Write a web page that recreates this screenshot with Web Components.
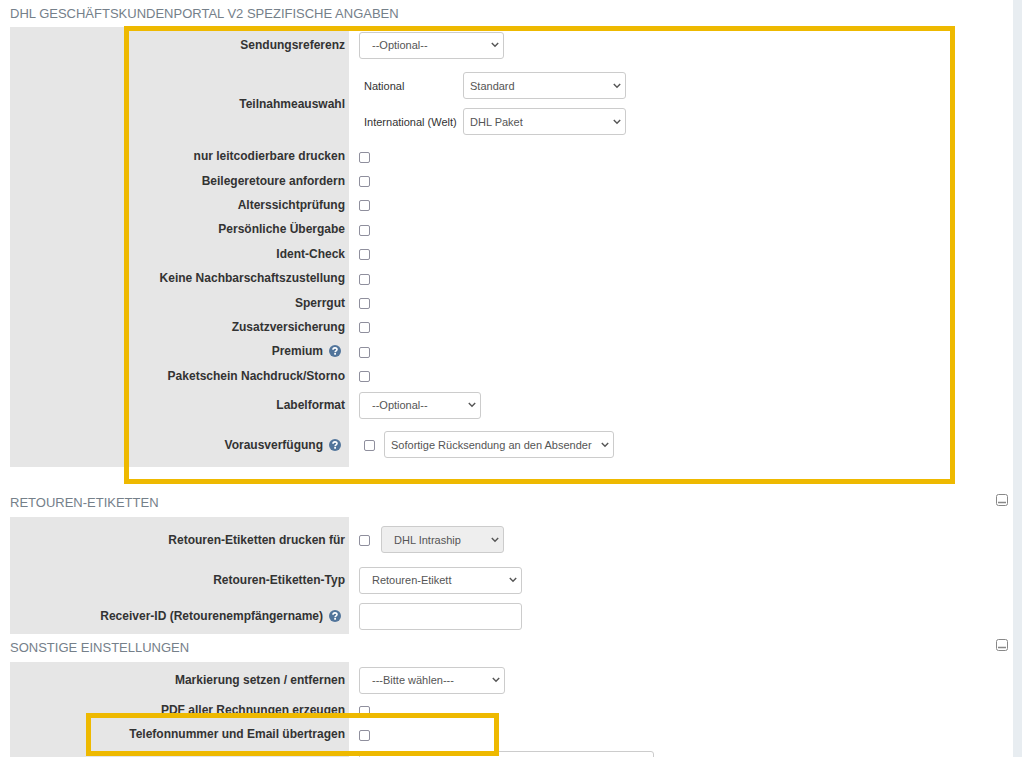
<!DOCTYPE html>
<html lang="de">
<head>
<meta charset="utf-8">
<title>Versandart</title>
<style>
  html { scrollbar-width: none; }
  body { margin: 0; background: #fff; font: 11px/16px "Liberation Sans", Arial, sans-serif; color: #333; }
</style>
</head>
<body>
<settings-page>
  <settings-section heading="DHL Geschäftskundenportal V2 spezifische Angaben" framed>
    <select-row options="--Optional--" size="145">Sendungsreferenz</select-row>
    <participation-row>Teilnahmeauswahl</participation-row>
    <check-list>
      <check-row>nur leitcodierbare drucken</check-row>
      <check-row>Beilegeretoure anfordern</check-row>
      <check-row>Alterssichtprüfung</check-row>
      <check-row>Persönliche Übergabe</check-row>
      <check-row>Ident-Check</check-row>
      <check-row>Keine Nachbarschaftszustellung</check-row>
      <check-row>Sperrgut</check-row>
      <check-row>Zusatzversicherung</check-row>
      <check-row help>Premium</check-row>
      <check-row>Paketschein Nachdruck/Storno</check-row>
    </check-list>
    <select-row options="--Optional--" size="122" class="compact">Labelformat</select-row>
    <check-select-row help options="Sofortige Rücksendung an den Absender" size="230" class="tall wide">Vorausverfügung</check-select-row>
  </settings-section>

  <settings-section heading="Retouren-Etiketten" collapsible>
    <check-select-row options="DHL Intraship" size="123" locked class="tall">Retouren-Etiketten drucken für</check-select-row>
    <select-row options="Retouren-Etikett" size="163">Retouren-Etiketten-Typ</select-row>
    <text-row size="163" help>Receiver-ID (Retourenempfängername)</text-row>
  </settings-section>

  <settings-section heading="Sonstige Einstellungen" collapsible>
    <select-row options="---Bitte wählen---" size="146">Markierung setzen / entfernen</select-row>
    <check-row>PDF aller Rechnungen erzeugen</check-row>
    <marked-row><check-row>Telefonnummer und Email übertragen</check-row></marked-row>
    <text-row size="295"></text-row>
  </settings-section>
</settings-page>

<script>
const HELP = `<svg class="help" role="img" aria-label="Hilfe" width="12" height="12" viewBox="0 0 12 12">
  <circle cx="6" cy="6" r="6" fill="#52759b"/>
  <path d="M4 4.700C4 2.300 8 2.300 8 4.500C8 5.900 6.100 5.700 6.100 7.200" fill="none" stroke="#fff" stroke-width="1.600"/>
  <rect x="5.200" y="8" width="1.800" height="1.700" fill="#fff"/></svg>`;

const CHEVRON = `<svg class="chevron" aria-hidden="true" width="8" height="6" viewBox="0 0 8 6">
  <path d="M0.800 1L4 4.300L7.200 1" fill="none" stroke="#555" stroke-width="1.400"/></svg>`;

const ROW_CSS = `
  :host { display: grid; grid-template-columns: 339px 1fr; min-height: 36px; }
  :host(.tall) { min-height: 45px; }
  :host(.compact) { min-height: 34px; }
  .caption { display: flex; align-items: center; justify-content: flex-end; gap: 6px;
             background: #e6e6e6; padding-right: 4px; font-size: 12px; font-weight: bold; }
  .help { margin-right: 4px; }
  .value { display: flex; align-items: center; padding-left: 10px; }
  input, select { box-sizing: border-box; margin: 0; font: inherit; color: #555; background: #fff; }
  input[type=checkbox] { appearance: none; width: 11px; height: 11px; flex: none; position: relative; top: 1px;
                         border: 1px solid #8f8f9d; border-radius: 2px; }
  input[type=checkbox]:checked { background: #52759b; }
  input[type=text] { height: 27px; border: 1px solid #ccc; border-radius: 3px; padding: 0 7px; }
  .pick { display: grid; align-items: center; }
  .pick > * { grid-area: 1 / 1; }
  select { appearance: none; width: 100%; height: 27px; border: 1px solid #ccc; border-radius: 3px; padding: 0 20px 0 12px; }
  select.near { padding-left: 6px; }
  select:disabled { background: #eee; opacity: 1; }
  .chevron { justify-self: end; margin-right: 5px; pointer-events: none; }`;

const pick = (id, text, width, attrs = "") =>
  `<span class="pick" style="width:${width}px"><select id="${id}" ${attrs}><option>${text}</option></select>${CHEVRON}</span>`;

class FieldRow extends HTMLElement {
  constructor() {
    super();
    this.attachShadow({ mode: "open" });
  }
  connectedCallback() {
    this.shadowRoot.innerHTML = `<style>${ROW_CSS}${this.css()}</style>
      <div class="caption"><label for="field"><slot></slot></label>${this.hasAttribute("help") ? HELP : ""}</div>
      <div class="value">${this.control()}</div>`;
  }
  css() { return ""; }
  get size() { return this.getAttribute("size"); }
  get caption() { return this.textContent.trim(); }
}

customElements.define("check-row", class extends FieldRow {
  css() { return `:host { min-height: 24px; }`; }
  control() { return `<input type="checkbox" id="field">`; }
});

customElements.define("select-row", class extends FieldRow {
  control() { return pick("field", this.getAttribute("options"), this.size); }
});

customElements.define("text-row", class extends FieldRow {
  control() { return `<input type="text" id="field" style="width:${this.size}px">`; }
});

customElements.define("check-select-row", class extends FieldRow {
  css() {
    return `.value { gap: 11px; }
      :host(.wide) .value { padding-left: 15px; gap: 9px; }`;
  }
  control() {
    const locked = this.hasAttribute("locked") ? "disabled" : "";
    const near = this.classList.contains("wide") ? `class="near"` : "";
    return `<input type="checkbox" id="field">` +
      pick("choice", this.getAttribute("options"), this.size, `${near} ${locked} aria-label="${this.caption}"`);
  }
});

customElements.define("participation-row", class extends FieldRow {
  css() {
    return `.value { padding: 9px 0 9px 15px; }
      .pairs { display: grid; grid-template-columns: 90px auto; gap: 9px; align-items: center; white-space: nowrap; }`;
  }
  control() {
    return `<div class="pairs">
      <label for="field">National</label>${pick("field", "Standard", 163, `class="near"`)}
      <label for="world">International (Welt)</label>${pick("world", "DHL Paket", 163, `class="near"`)}
    </div>`;
  }
});

customElements.define("check-list", class extends HTMLElement {
  constructor() {
    super();
    this.attachShadow({ mode: "open" }).innerHTML = `
      <style>:host { display: grid; grid-auto-rows: 1fr; min-height: 244px; }</style><slot></slot>`;
  }
});

customElements.define("marked-row", class extends HTMLElement {
  constructor() {
    super();
    this.attachShadow({ mode: "open" }).innerHTML = `
      <style>
        :host { display: block; position: relative; }
        .frame { position: absolute; left: 76px; top: -9px; width: 413px; height: 43px; z-index: 2;
                 box-sizing: border-box; border: 5px solid #eeb900; pointer-events: none; }
      </style><slot></slot><div class="frame"></div>`;
  }
});

customElements.define("settings-section", class extends HTMLElement {
  constructor() {
    super();
    this.attachShadow({ mode: "open" });
  }
  connectedCallback() {
    this.shadowRoot.innerHTML = `
      <style>
        :host { display: block; position: relative; padding-left: 10px; }
        :host([framed]) { margin-bottom: 22px; }
        header { display: flex; align-items: center; justify-content: space-between; height: 27px; padding-right: 5px; }
        :host([collapsible]) header { height: 28px; }
        h2 { margin: 0; font-size: 13px; line-height: 16px; font-weight: normal; text-transform: uppercase; color: #75808a; }
        button { display: block; border: 0; padding: 0 0 6px; background: none; }
        svg { display: block; }
        .frame { position: absolute; left: 124px; right: 58px; top: 26px; bottom: -17px;
                 border: 5px solid #eeb900; pointer-events: none; }
      </style>
      <header><h2>${this.getAttribute("heading")}</h2>${this.hasAttribute("collapsible") ? `
        <button type="button" aria-label="Einklappen"><svg width="12" height="12" viewBox="0 0 12 12">
          <rect x="0.500" y="0.500" width="11" height="11" rx="2" fill="#fff" stroke="#888"/>
          <path d="M2 8.500H10" stroke="#888" stroke-width="1.500"/></svg></button>` : ""}</header>
      <slot></slot>${this.hasAttribute("framed") ? `<div class="frame"></div>` : ""}`;
  }
});

customElements.define("settings-page", class extends HTMLElement {
  constructor() {
    super();
    this.attachShadow({ mode: "open" }).innerHTML = `
      <style>:host { display: block; box-sizing: border-box; min-height: 100vh; border-right: 9px solid #e8edf1; }</style>
      <main><slot></slot></main>`;
  }
});
</script>
</body>
</html>
